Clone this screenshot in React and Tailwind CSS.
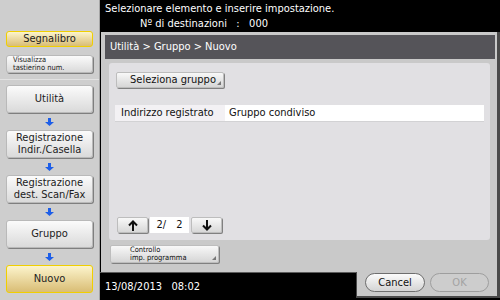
import clsx from "clsx";

const DownArrow = () => (
  <div className="h-[17px] flex items-center justify-center">
    <svg width="9" height="8" viewBox="0 0 9 8">
      <path d="M3 0h3v4h3L4.5 8 0 4h3z" fill="#1d5ee8" />
    </svg>
  </div>
);

const SideButton = ({ children, yellow, small, className }) => (
  <div
    className={clsx(
      "rounded-[3px] flex flex-col justify-center text-[#1c1c1c]",
      yellow
        ? "border-[1.5px] border-[#f0cf00] bg-gradient-to-b from-[#fcf4cc] to-[#d9bd74]"
        : "border border-[#b9b9b9] bg-gradient-to-b from-[#fbfbfb] to-[#dadada] shadow-[1px_1px_0_#7f7f7f]",
      small ? "items-start pl-[6px] text-[7.5px] leading-[8.5px]" : "items-center text-center text-[11px] leading-[12px]",
      className
    )}
  >
    {children}
  </div>
);

const Corner = () => (
  <span className="absolute right-[2px] bottom-[2px] w-0 h-0 border-l-[4px] border-l-transparent border-b-[4px] border-b-[#777]" />
);

const PagerArrow = ({ up }) => (
  <div className="w-[31px] h-[16px] rounded-[2px] border border-[#bdbdbd] bg-gradient-to-b from-[#f8f8f8] to-[#d8d8d8] shadow-[1px_1px_0_#808080] flex items-center justify-center">
    <svg width="10" height="11" viewBox="0 0 10 11" className={up ? "" : "rotate-180"}>
      <path d="M5 2v9M1 5.5 5 1.5l4 4" stroke="#111" strokeWidth="2" fill="none" />
    </svg>
  </div>
);

export default function App() {
  return (
    <div className="w-[500px] h-[300px] flex overflow-hidden bg-black font-['DejaVu_Sans_Condensed','DejaVu_Sans',sans-serif]">
      {/* left column */}
      <div className="w-[100px] h-full bg-[#cecece] border-r border-[#a4a4a4] flex flex-col px-[6px] pt-[31px]">
        <SideButton yellow className="h-[16px]">Segnalibro</SideButton>
        <SideButton small className="h-[18px] mt-[8px]">
          <span>Visualizza</span>
          <span>tastierino num.</span>
        </SideButton>
        <div className="h-px bg-[#a9a9a9] -mx-[6px] mt-[6px] mb-[5px] border-b border-[#e2e2e2]" />
        <SideButton className="h-[28px]">Utilità</SideButton>
        <DownArrow />
        <SideButton className="h-[28px]">
          <span>Registrazione</span>
          <span>Indir./Casella</span>
        </SideButton>
        <DownArrow />
        <SideButton className="h-[28px]">
          <span>Registrazione</span>
          <span>dest. Scan/Fax</span>
        </SideButton>
        <DownArrow />
        <SideButton className="h-[28px]">Gruppo</SideButton>
        <DownArrow />
        <SideButton yellow className="h-[28px]">Nuovo</SideButton>
      </div>

      {/* right column */}
      <div className="flex-1 flex flex-col text-[11px] leading-[12px]">
        <div className="h-[32px] text-white pl-[5px] pt-[3px]">
          <p>Selezionare elemento e inserire impostazione.</p>
          <p className="mt-[3px] pl-[35px] whitespace-pre">Nº di destinazioni   :   000</p>
        </div>

        <div className="ml-[1px] h-[240px] bg-[#c9c9c9] border-r-[3px] border-[#4a4a4a] flex flex-col pt-[3px] pl-[4px] pr-[2px]">
          <div className="h-[24px] bg-[#555459] text-white flex items-center pl-[5px]">
            Utilità &gt; Gruppo &gt; Nuovo
          </div>
          <div className="mt-[4px] ml-[4px] mr-[5px] h-[177px] rounded-[3px] bg-[#e1e0e3] flex flex-col pt-[9px] px-[6px]">
            <div className="relative ml-[1px] w-[108px] h-[16px] rounded-[2px] border border-[#bdbdbd] bg-gradient-to-b from-[#f8f8f8] to-[#d6d6d6] shadow-[1px_1px_0_#808080] flex items-center pl-[13px] text-[#111]">
              Seleziona gruppo
              <Corner />
            </div>
            <div className="mt-[17px] h-[17px] flex border-b border-[#d2d2d4] text-[#111]">
              <div className="w-[110px] bg-[#f3f1f4] flex items-center pl-[6px]">Indirizzo registrato</div>
              <div className="flex-1 bg-white flex items-center pl-[4px]">Gruppo condiviso</div>
            </div>
            <div className="mt-auto mb-[7px] ml-[2px] flex items-center gap-[2px]">
              <PagerArrow up />
              <div className="w-[39px] h-[16px] bg-white flex items-center justify-center gap-[10px] text-[#111]">
                <span>2/</span>
                <span>2</span>
              </div>
              <PagerArrow />
            </div>
          </div>
          <div className="relative mt-[5px] ml-[5px] w-[109px] h-[18px] rounded-[2px] border border-[#bdbdbd] bg-gradient-to-b from-[#f8f8f8] to-[#d6d6d6] shadow-[1px_1px_0_#808080] flex flex-col justify-center pl-[19px] text-[7.5px] leading-[8.5px] text-[#111]">
            <span>Controllo</span>
            <span>imp. programma</span>
            <Corner />
          </div>
        </div>

        <div className="flex h-[28px]">
          <div className="w-[256px] border-t border-[#5c5c5c] text-white flex items-center pl-[5px] whitespace-pre">
            13/08/2013   08:02
          </div>
          <div className="flex-1 h-[26px] bg-[#c9c9c9] border-l border-r-[3px] border-b-2 border-[#4a4a4a] flex items-start pt-px pl-[8px] gap-[5px]">
            <div className="w-[60px] h-[19px] rounded-full border border-[#6e6e6e] bg-gradient-to-b from-[#fbfbfb] to-[#d4d4d4] flex items-center justify-center text-[#111]">
              Cancel
            </div>
            <div className="w-[59px] h-[19px] rounded-full border border-[#9e9e9e] bg-[#cdcdcd] flex items-center justify-center text-[#a3a3a3]">
              OK
            </div>
          </div>
        </div>
      </div>
    </div>
  );
}
